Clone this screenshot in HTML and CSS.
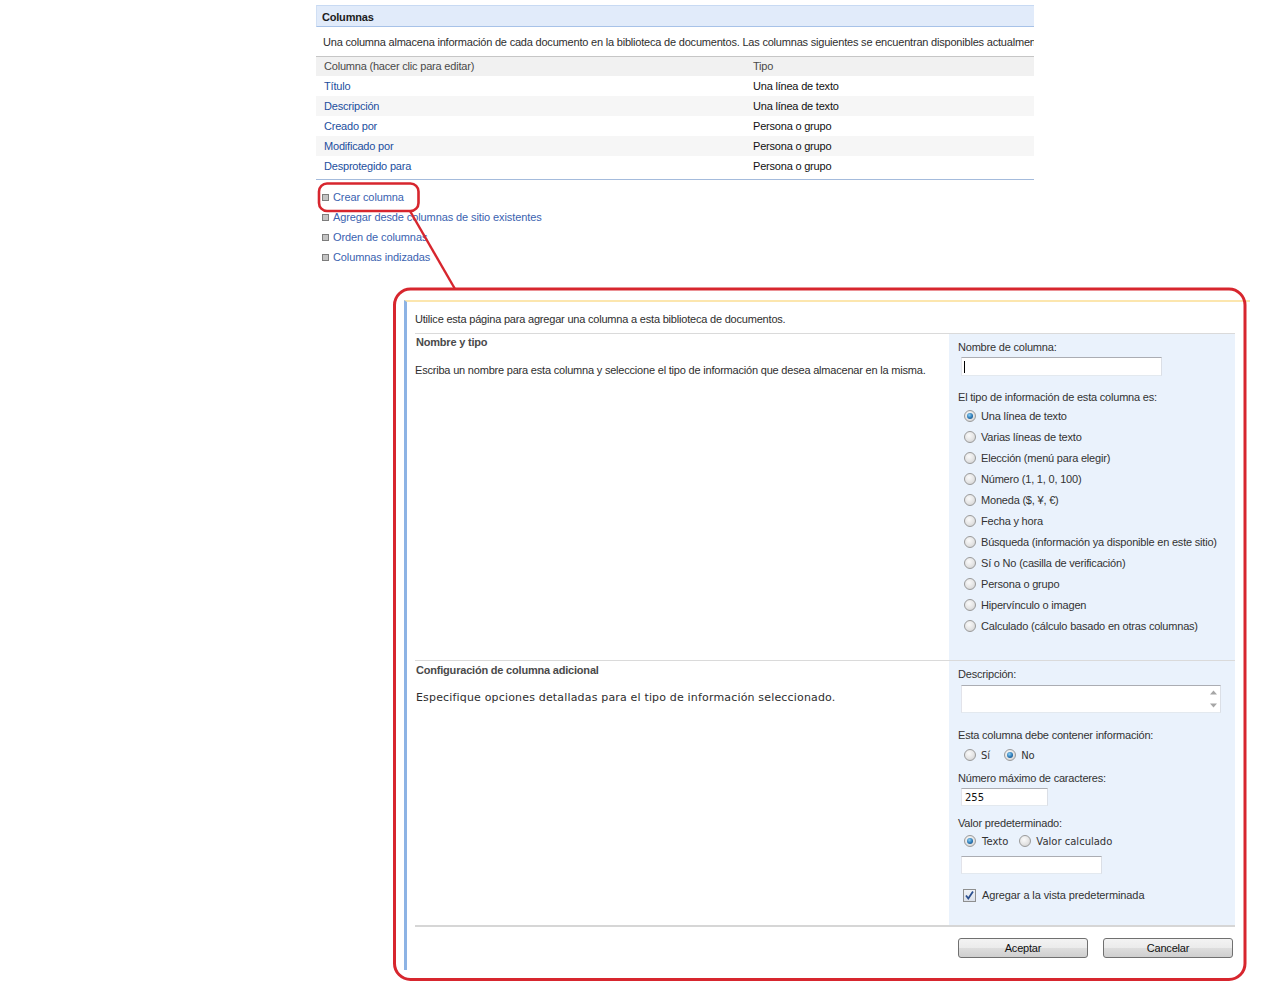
FILE: index.html
```html
<!DOCTYPE html>
<html lang="es">
<head>
<meta charset="utf-8">
<title>Columnas</title>
<link rel="stylesheet" href="styles.css">
</head>
<body>
<div class="page">
  <section class="cols">
    <div class="cols-title">Columnas</div>
    <div class="cols-desc">Una columna almacena información de cada documento en la biblioteca de documentos. Las columnas siguientes se encuentran disponibles actualmente en esta biblioteca de documentos:</div>
    <div class="cols-table">
      <div class="row head"><span>Columna (hacer clic para editar)</span><span>Tipo</span></div>
      <div class="row"><a href="#">Título</a><span>Una línea de texto</span></div>
      <div class="row alt"><a href="#">Descripción</a><span>Una línea de texto</span></div>
      <div class="row"><a href="#">Creado por</a><span>Persona o grupo</span></div>
      <div class="row alt"><a href="#">Modificado por</a><span>Persona o grupo</span></div>
      <div class="row"><a href="#">Desprotegido para</a><span>Persona o grupo</span></div>
    </div>
    <ul class="links">
      <li><a href="#">Crear columna</a></li>
      <li><a href="#">Agregar desde columnas de sitio existentes</a></li>
      <li><a href="#">Orden de columnas</a></li>
      <li><a href="#">Columnas indizadas</a></li>
    </ul>
  </section>

  <div class="callout">
    <form class="form">
      <div class="intro">Utilice esta página para agregar una columna a esta biblioteca de documentos.</div>

      <div class="section">
        <div class="sec-left s1">
          <div class="sec-title">Nombre y tipo</div>
          <div class="sec-desc">Escriba un nombre para esta columna y seleccione el tipo de información que desea almacenar en la misma.</div>
        </div>
        <div class="sec-right r1">
          <div class="lbl">Nombre de columna:</div>
          <div class="input name-input"><span class="caret"></span></div>
          <div class="lbl lbl-type">El tipo de información de esta columna es:</div>
          <div class="radios">
            <div class="opt"><span class="radio on"></span>Una línea de texto</div>
            <div class="opt"><span class="radio"></span>Varias líneas de texto</div>
            <div class="opt"><span class="radio"></span>Elección (menú para elegir)</div>
            <div class="opt"><span class="radio"></span>Número (1, 1, 0, 100)</div>
            <div class="opt"><span class="radio"></span>Moneda ($, ¥, €)</div>
            <div class="opt"><span class="radio"></span>Fecha y hora</div>
            <div class="opt"><span class="radio"></span>Búsqueda (información ya disponible en este sitio)</div>
            <div class="opt"><span class="radio"></span>Sí o No (casilla de verificación)</div>
            <div class="opt"><span class="radio"></span>Persona o grupo</div>
            <div class="opt"><span class="radio"></span>Hipervínculo o imagen</div>
            <div class="opt"><span class="radio"></span>Calculado (cálculo basado en otras columnas)</div>
          </div>
        </div>
      </div>

      <div class="section">
        <div class="sec-left s2">
          <div class="sec-title">Configuración de columna adicional</div>
          <div class="sec-desc verd">Especifique opciones detalladas para el tipo de información seleccionado.</div>
        </div>
        <div class="sec-right r2">
          <div class="lbl">Descripción:</div>
          <div class="textarea">
            <div class="scroll">
              <svg width="7" height="5" viewBox="0 0 7 5"><path d="M0 4.5 L3.5 0.5 L7 4.5 Z" fill="#a6a6a6"/></svg>
              <svg width="7" height="5" viewBox="0 0 7 5"><path d="M0 0.5 L3.5 4.5 L7 0.5 Z" fill="#a6a6a6"/></svg>
            </div>
          </div>
          <div class="lbl lbl-req">Esta columna debe contener información:</div>
          <div class="inline-opts req">
            <span class="radio"></span><span class="verd t-si">Sí</span>
            <span class="radio on r-no"></span><span class="verd">No</span>
          </div>
          <div class="lbl lbl-max">Número máximo de caracteres:</div>
          <div class="input max-input verd">255</div>
          <div class="lbl lbl-def">Valor predeterminado:</div>
          <div class="inline-opts def">
            <span class="radio on"></span><span class="verd t-texto">Texto</span>
            <span class="radio r-calc"></span><span class="verd">Valor calculado</span>
          </div>
          <div class="input def-input"></div>
          <div class="check-row">
            <span class="checkbox"><svg width="11" height="11" viewBox="0 0 11 11"><path d="M2 5.5 L4.3 8.5 L9 1.5" fill="none" stroke="#2a4f8e" stroke-width="1.8"/></svg></span>
            <span class="check-lbl">Agregar a la vista predeterminada</span>
          </div>
        </div>
      </div>

      <div class="buttons">
        <button type="button" class="btn">Aceptar</button>
        <button type="button" class="btn">Cancelar</button>
      </div>
    </form>
  </div>
</div>

<svg class="annot" width="1267" height="999" viewBox="0 0 1267 999">
  <rect x="319" y="183.5" width="99.5" height="27.5" rx="8" fill="none" stroke="#d7262e" stroke-width="2.6"/>
  <line x1="410" y1="211" x2="455" y2="289" stroke="#d7262e" stroke-width="2.4"/>
  <rect x="394.5" y="289" width="850.5" height="690.5" rx="16" fill="none" stroke="#d7262e" stroke-width="3"/>
</svg>
</body>
</html>
```
FILE: styles.css
```css
* { box-sizing: border-box; }
html, body { margin: 0; padding: 0; background: #fff; }
body {
  font-family: "Liberation Sans", Arial, sans-serif;
  font-size: 11px;
  color: #333;
  position: relative;
  width: 1267px;
  min-height: 999px;
  overflow: hidden;
}
a { text-decoration: none; }

.page { padding-top: 5px; }

/* ---------- top: Columnas ---------- */
.cols {
  margin-left: 316px;
  width: 718px;
  overflow: hidden;
  letter-spacing: -0.2px;
}
.cols-title {
  height: 22px;
  line-height: 20px;
  padding-top: 1px;
  padding-left: 5px;
  font-weight: bold;
  color: #1c1c1c;
  background: #e1ebfa;
  border-top: 1px solid #c8daf3;
  border-bottom: 1px solid #a7c2e8;
  border-left: 1px solid #d0dff4;
}
.cols-desc {
  height: 29px;
  line-height: 30px;
  padding-left: 7px;
  white-space: nowrap;
  color: #2e2e2e;
}
.cols-table {
  border-top: 1px solid #c6c6c6;
  padding-bottom: 3px;
  border-bottom: 1px solid #a4bbdc;
}
.row {
  display: grid;
  grid-template-columns: 437px 1fr;
  height: 20px;
  line-height: 20px;
}
.row > * { padding-left: 8px; white-space: nowrap; }
.row > :last-child { padding-left: 0; color: #111; }
.row.head { height: 19px; line-height: 19px; background: #f1f1f1; }
.row.head > * { color: #4a4a4a; }
.row.alt { background: #f6f6f6; }
.row a { color: #1d4f9e; }

.links {
  list-style: none;
  margin: 7px 0 0 0;
  padding: 0;
}
.links li {
  height: 20px;
  line-height: 20px;
  display: flex;
  align-items: center;
  padding-left: 6px;
}
.links li::before {
  content: "";
  width: 5px;
  height: 5px;
  background: #c4c4c4;
  border: 1px solid #7d7d7d;
  margin-right: 4px;
  flex: none;
}
.links a { color: #3a62b0; letter-spacing: -0.1px; }

/* ---------- callout / form ---------- */
.callout {
  margin: 21px 0 0 394px;
  width: 852px;
  padding: 12px 0 11px 10px;
}
.form {
  width: 846px;
  border-top: 2px solid #fce6ae;
  border-left: 3px solid #8db3e4;
  padding: 0 15px 12px 8px;
  letter-spacing: -0.2px;
}
.intro {
  padding: 10px 0 7px 0;
  line-height: 14px;
  color: #2e2e2e;
}
.section {
  display: grid;
  grid-template-columns: 534px 286px;
  border-top: 1px solid #dadada;
}
.sec-title {
  line-height: 14px;
  font-weight: bold;
  color: #4a4a4a;
  padding-left: 1px;
}
.sec-desc {
  line-height: 14px;
  margin-top: 14px;
  color: #2e2e2e;
}
.s1 { padding-top: 1px; }
.s2 { padding-top: 2px; }
.s2 .sec-desc { padding-left: 1px; }

.verd {
  font-family: "DejaVu Sans", Verdana, sans-serif;
  font-size: 10px;
  letter-spacing: 0;
}
.sec-desc.verd { font-size: 11px; letter-spacing: 0.17px; }
.check-lbl { letter-spacing: -0.1px; }

.sec-right {
  background: #eaf2fc;
  padding-left: 9px;
}
.r1 { padding-top: 6px; padding-bottom: 24px; }
.r2 { padding-top: 6px; padding-bottom: 20px; }
.lbl { line-height: 14px; color: #333; }

.input {
  margin-left: 3px;
  background: #fff;
  border: 1px solid;
  border-color: #abadb3 #dbdfe6 #e3e9ef #e2e3ea;
}
.name-input {
  margin-top: 3px;
  width: 201px;
  height: 19px;
  position: relative;
}
.caret {
  position: absolute;
  left: 2px;
  top: 3px;
  width: 1px;
  height: 12px;
  background: #000;
}
.lbl-type { margin-top: 14px; }
.radios { margin-top: 1px; }
.opt {
  height: 21px;
  display: flex;
  align-items: center;
  padding-left: 6px;
  color: #333;
}
.radio {
  width: 12px;
  height: 12px;
  flex: none;
  border-radius: 50%;
  border: 1px solid #9a9a9a;
  background: radial-gradient(circle at 40% 35%, #fafafa 0%, #e4e4e4 55%, #c9c9c9 100%);
  margin-right: 5px;
  position: relative;
}
.radio.on::after {
  content: "";
  position: absolute;
  left: 2px;
  top: 2px;
  width: 6px;
  height: 6px;
  border-radius: 50%;
  background: radial-gradient(circle at 40% 35%, #8fd0f5 0%, #2a78b5 55%, #0e3d6b 100%);
}

.textarea {
  margin-top: 4px;
  margin-left: 3px;
  width: 260px;
  height: 28px;
  background: #fff;
  border: 1px solid;
  border-color: #abadb3 #dbdfe6 #e3e9ef #e2e3ea;
  display: flex;
  justify-content: flex-end;
}
.scroll {
  width: 14px;
  display: flex;
  flex-direction: column;
  justify-content: space-between;
  align-items: center;
  padding: 4px 0 4px 0;
}
.scroll svg { display: block; }

.lbl-req { margin-top: 15px; }
.inline-opts {
  height: 20px;
  display: flex;
  align-items: center;
  padding-left: 6px;
  color: #333;
}
.req { margin-top: 3px; }
.t-si { margin-right: 14px; }
.lbl-max { margin-top: 6px; }
.max-input {
  margin-top: 3px;
  width: 87px;
  height: 18px;
  line-height: 18px;
  padding-left: 3px;
  color: #111;
}
.lbl-def { margin-top: 10px; }
.def { margin-top: 1px; }
.def .radio:first-child { margin-right: 6px; }
.t-texto { margin-right: 11px; }
.def-input {
  margin-top: 5px;
  width: 141px;
  height: 18px;
}
.check-row {
  margin-top: 11px;
  height: 20px;
  display: flex;
  align-items: center;
  padding-left: 5px;
  color: #333;
}
.checkbox {
  width: 13px;
  height: 13px;
  border: 1px solid #8e8f8f;
  background: linear-gradient(#eef2f7, #dbe1ea);
  margin-right: 6px;
  display: flex;
  align-items: center;
  justify-content: center;
}
.checkbox svg { display: block; }

.buttons {
  border-top: 2px solid #d6d6d6;
  padding: 11px 2px 0 0;
  display: flex;
  justify-content: flex-end;
  gap: 15px;
}
.btn {
  width: 130px;
  height: 20px;
  margin: 0;
  padding: 0;
  font-family: "Liberation Sans", Arial, sans-serif;
  font-size: 11px;
  letter-spacing: -0.2px;
  color: #111;
  border: 1px solid #707070;
  border-radius: 3px;
  background: linear-gradient(#f3f3f3 0%, #ebebeb 50%, #dddddd 51%, #cfcfcf 100%);
}

/* ---------- annotation overlay ---------- */
.annot {
  position: absolute;
  left: 0;
  top: 0;
  pointer-events: none;
}
```
